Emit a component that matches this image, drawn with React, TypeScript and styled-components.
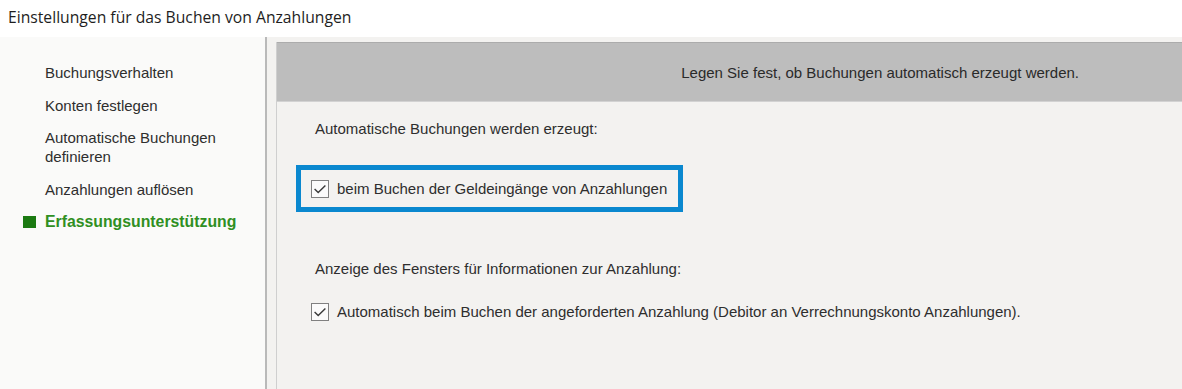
import React from "react";
import styled, { createGlobalStyle } from "styled-components";

const Global = createGlobalStyle`
  html, body { margin: 0; padding: 0; background: #ffffff; }
  body { font-family: "Liberation Sans", Arial, sans-serif; }
  * { box-sizing: border-box; }
`;

const Window = styled.div`
  width: 1182px;
  height: 389px;
  display: flex;
  flex-direction: column;
  background: #ffffff;
  overflow: hidden;
`;

const TitleBar = styled.div`
  height: 37px;
  flex: none;
  display: flex;
  align-items: center;
  padding: 0 0 3px 8px;
  font-family: "Open Sans", "Noto Sans", sans-serif;
  font-size: 15.7px;
  color: #1e1e1e;
`;

const Main = styled.div`
  flex: 1;
  display: flex;
  min-height: 0;
`;

const Sidebar = styled.nav`
  width: 267px;
  flex: none;
  background: #fafaf9;
  border-right: 2px solid #b9b9b9;
  padding: 26px 20px 0 23px;
  display: flex;
  flex-direction: column;
  gap: 13.5px;
`;

const NavItem = styled.div<{ $active?: boolean }>`
  display: flex;
  align-items: flex-start;
  font-size: ${(p) => (p.$active ? "15.8px" : "15px")};
  line-height: 19px;
  color: ${(p) => (p.$active ? "#2f8f22" : "#2e2e2e")};
  font-weight: ${(p) => (p.$active ? 700 : 400)};
`;

const Marker = styled.span<{ $visible?: boolean }>`
  flex: none;
  width: 13px;
  height: 12px;
  margin: 4px 9px 0 0;
  background: ${(p) => (p.$visible ? "#1b7a12" : "transparent")};
`;

const Content = styled.div`
  flex: 1;
  background: #f3f2f0;
  padding: 5px 0 0 9px;
  display: flex;
  min-width: 0;
`;

const Panel = styled.section`
  flex: 1;
  border-left: 1px solid #cfcfcf;
  display: flex;
  flex-direction: column;
`;

const Header = styled.div`
  height: 60px;
  flex: none;
  background: #bdbdbd;
  border-top: 1px solid #acacac;
  border-bottom: 1px solid #d2d2d2;
  display: flex;
  align-items: center;
  justify-content: flex-end;
  padding-right: 103px;
  font-size: 15px;
  color: #2a2a2a;
`;

const Body = styled.div`
  padding: 17px 0 0 38px;
  display: flex;
  flex-direction: column;
`;

const SectionLabel = styled.div<{ $top?: number }>`
  font-size: 15px;
  line-height: 19px;
  color: #2e2e2e;
  margin-top: ${(p) => p.$top ?? 0}px;
`;

const CheckRow = styled.label<{ $highlight?: boolean; $top?: number }>`
  align-self: flex-start;
  display: flex;
  align-items: center;
  gap: 8px;
  margin: ${(p) => p.$top ?? 0}px 0 0 -19px;
  padding: 9px 11px 9px 10px;
  border: 5px solid ${(p) => (p.$highlight ? "#0a88cf" : "transparent")};
  font-size: 15px;
  line-height: 19px;
  color: #2e2e2e;
`;

const Box = styled.span`
  width: 18px;
  height: 18px;
  flex: none;
  border: 1px solid #808080;
  background: #fbfbfb;
  display: flex;
  align-items: center;
  justify-content: center;
`;

const Check = () => (
  <Box>
    <svg width="16" height="16" viewBox="0 0 16 16">
      <path d="M2.6 8 L6.2 11.6 L13.4 4.4" fill="none" stroke="#3a3a3a" strokeWidth="1.4" />
    </svg>
  </Box>
);

export default function App() {
  return (
    <>
      <Global />
      <Window>
        <TitleBar>Einstellungen für das Buchen von Anzahlungen</TitleBar>
        <Main>
          <Sidebar>
            <NavItem><Marker />Buchungsverhalten</NavItem>
            <NavItem><Marker />Konten festlegen</NavItem>
            <NavItem><Marker />Automatische Buchungen definieren</NavItem>
            <NavItem><Marker />Anzahlungen auflösen</NavItem>
            <NavItem $active><Marker $visible />Erfassungsunterstützung</NavItem>
          </Sidebar>
          <Content>
            <Panel>
              <Header>Legen Sie fest, ob Buchungen automatisch erzeugt werden.</Header>
              <Body>
                <SectionLabel>Automatische Buchungen werden erzeugt:</SectionLabel>
                <CheckRow $highlight $top={27}>
                  <Check />
                  beim Buchen der Geldeingänge von Anzahlungen
                </CheckRow>
                <SectionLabel $top={47}>Anzeige des Fensters für Informationen zur Anzahlung:</SectionLabel>
                <CheckRow $top={10}>
                  <Check />
                  Automatisch beim Buchen der angeforderten Anzahlung (Debitor an Verrechnungskonto Anzahlungen).
                </CheckRow>
              </Body>
            </Panel>
          </Content>
        </Main>
      </Window>
    </>
  );
}
